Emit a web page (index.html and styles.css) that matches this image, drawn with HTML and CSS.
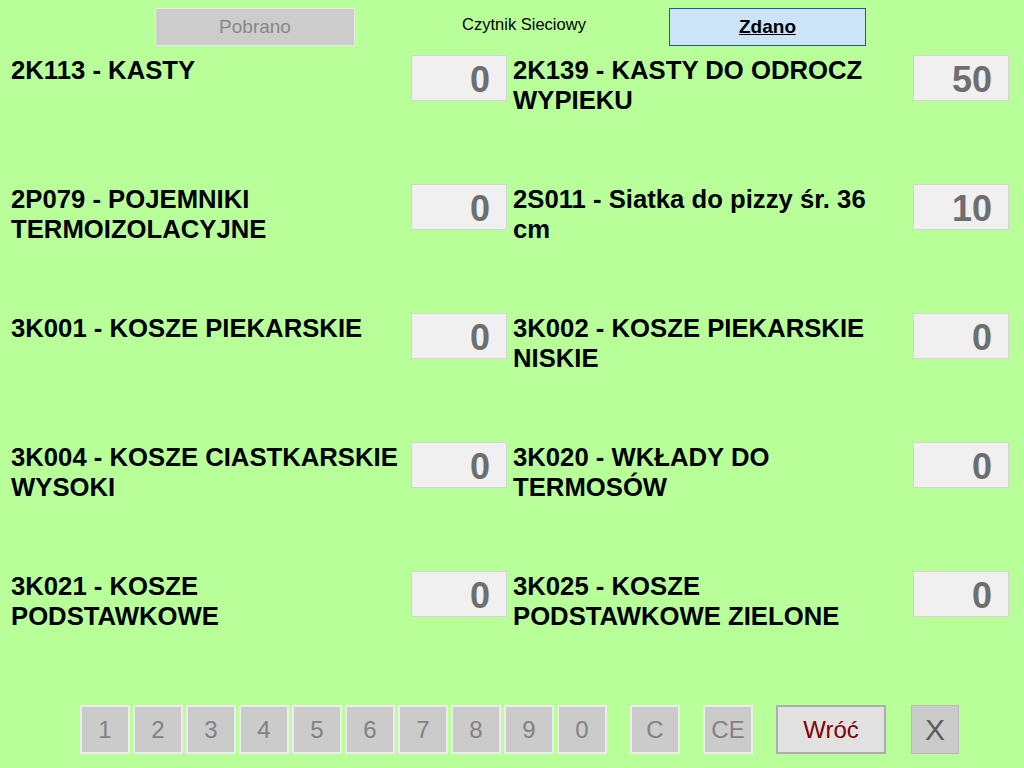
FILE: index.html
```html
<!DOCTYPE html>
<html lang="pl">
<head>
<meta charset="utf-8">
<title>Czytnik Sieciowy</title>
<link rel="stylesheet" href="styles.css">
</head>
<body>
<div class="screen">
  <div class="topbar">
    <button class="tab tab-off">Pobrano</button>
    <div class="title">Czytnik Sieciowy</div>
    <button class="tab tab-on">Zdano</button>
  </div>

  <div class="items">
    <div class="item"><div class="label">2K113 - KASTY</div><div class="qty">0</div></div>
    <div class="item"><div class="label">2K139 - KASTY DO ODROCZ WYPIEKU</div><div class="qty">50</div></div>
    <div class="item"><div class="label">2P079 - POJEMNIKI TERMOIZOLACYJNE</div><div class="qty">0</div></div>
    <div class="item"><div class="label">2S011 - Siatka do pizzy śr. 36 cm</div><div class="qty">10</div></div>
    <div class="item"><div class="label">3K001 - KOSZE PIEKARSKIE</div><div class="qty">0</div></div>
    <div class="item"><div class="label">3K002 - KOSZE PIEKARSKIE NISKIE</div><div class="qty">0</div></div>
    <div class="item"><div class="label">3K004 - KOSZE CIASTKARSKIE WYSOKI</div><div class="qty">0</div></div>
    <div class="item"><div class="label">3K020 - WKŁADY DO TERMOSÓW</div><div class="qty">0</div></div>
    <div class="item"><div class="label">3K021 - KOSZE PODSTAWKOWE</div><div class="qty">0</div></div>
    <div class="item"><div class="label">3K025 - KOSZE PODSTAWKOWE ZIELONE</div><div class="qty">0</div></div>
  </div>

  <div class="keypad">
    <div class="digits">
      <button class="key">1</button>
      <button class="key">2</button>
      <button class="key">3</button>
      <button class="key">4</button>
      <button class="key">5</button>
      <button class="key">6</button>
      <button class="key">7</button>
      <button class="key">8</button>
      <button class="key">9</button>
      <button class="key">0</button>
    </div>
    <button class="key key-c">C</button>
    <button class="key key-ce">CE</button>
    <button class="key-back">Wróć</button>
    <button class="key-x">X</button>
  </div>
</div>
</body>
</html>
```

FILE: styles.css
```css
html, body {
  margin: 0;
  padding: 0;
  background: #b9ff99;
}

body {
  font-family: "Liberation Sans", Arial, sans-serif;
  color: #000;
  width: 1024px;
  height: 768px;
  overflow: hidden;
}

button {
  font-family: "Liberation Sans", Arial, sans-serif;
  margin: 0;
  padding: 0;
  box-sizing: border-box;
  cursor: default;
}

.screen {
  display: flex;
  flex-direction: column;
}

/* top bar */
.topbar {
  height: 55px;
  display: grid;
  grid-template-columns: 200px 314px 197px;
  align-items: start;
  padding-left: 155px;
  padding-top: 8px;
  box-sizing: border-box;
}

.tab {
  height: 38px;
  font-size: 19px;
}

.tab-off {
  background: #cccccc;
  border: 1px solid #e8e8e8;
  color: #888888;
}

.tab-on {
  background: #cce4f7;
  border: 1px solid #1c5aa0;
  color: #000;
  font-weight: bold;
  text-decoration: underline;
}

.title {
  font-size: 16.5px;
  text-align: center;
  padding-left: 24px;
  padding-top: 7px;
  color: #000;
}

/* items grid */
.items {
  display: grid;
  grid-template-columns: 496px 496px;
  grid-auto-rows: 129px;
  column-gap: 6px;
  padding-left: 11px;
}

.item {
  display: flex;
  align-items: flex-start;
}

.label {
  width: 400px;
  box-sizing: border-box;
  padding-right: 8px;
  font-size: 25.7px;
  font-weight: bold;
  line-height: 30px;
}

.qty {
  width: 96px;
  height: 46px;
  box-sizing: border-box;
  background: #f0f0f0;
  border: 1px solid #d4d4d4;
  text-align: right;
  padding-right: 16px;
  font-size: 36px;
  font-weight: bold;
  line-height: 47px;
  color: #6e6e6e;
}

/* keypad */
.keypad {
  display: flex;
  align-items: flex-start;
  margin-top: 5px;
  padding-left: 80px;
}

.digits {
  display: flex;
  gap: 3px;
}

.key {
  width: 50px;
  height: 49px;
  background: #cbcbcb;
  border: 2px solid #ececec;
  color: #828282;
  font-size: 24px;
}

.key-c {
  margin-left: 23px;
}

.key-ce {
  margin-left: 23px;
}

.key-back {
  margin-left: 23px;
  width: 110px;
  height: 49px;
  background: #e1e1e1;
  border: 2px solid #adadad;
  color: #800000;
  font-size: 24px;
}

.key-x {
  margin-left: 25px;
  width: 48px;
  height: 49px;
  background: #cbcbcb;
  border: 1px solid #b8b8b8;
  color: #5c5c5c;
  font-size: 30px;
}
```
